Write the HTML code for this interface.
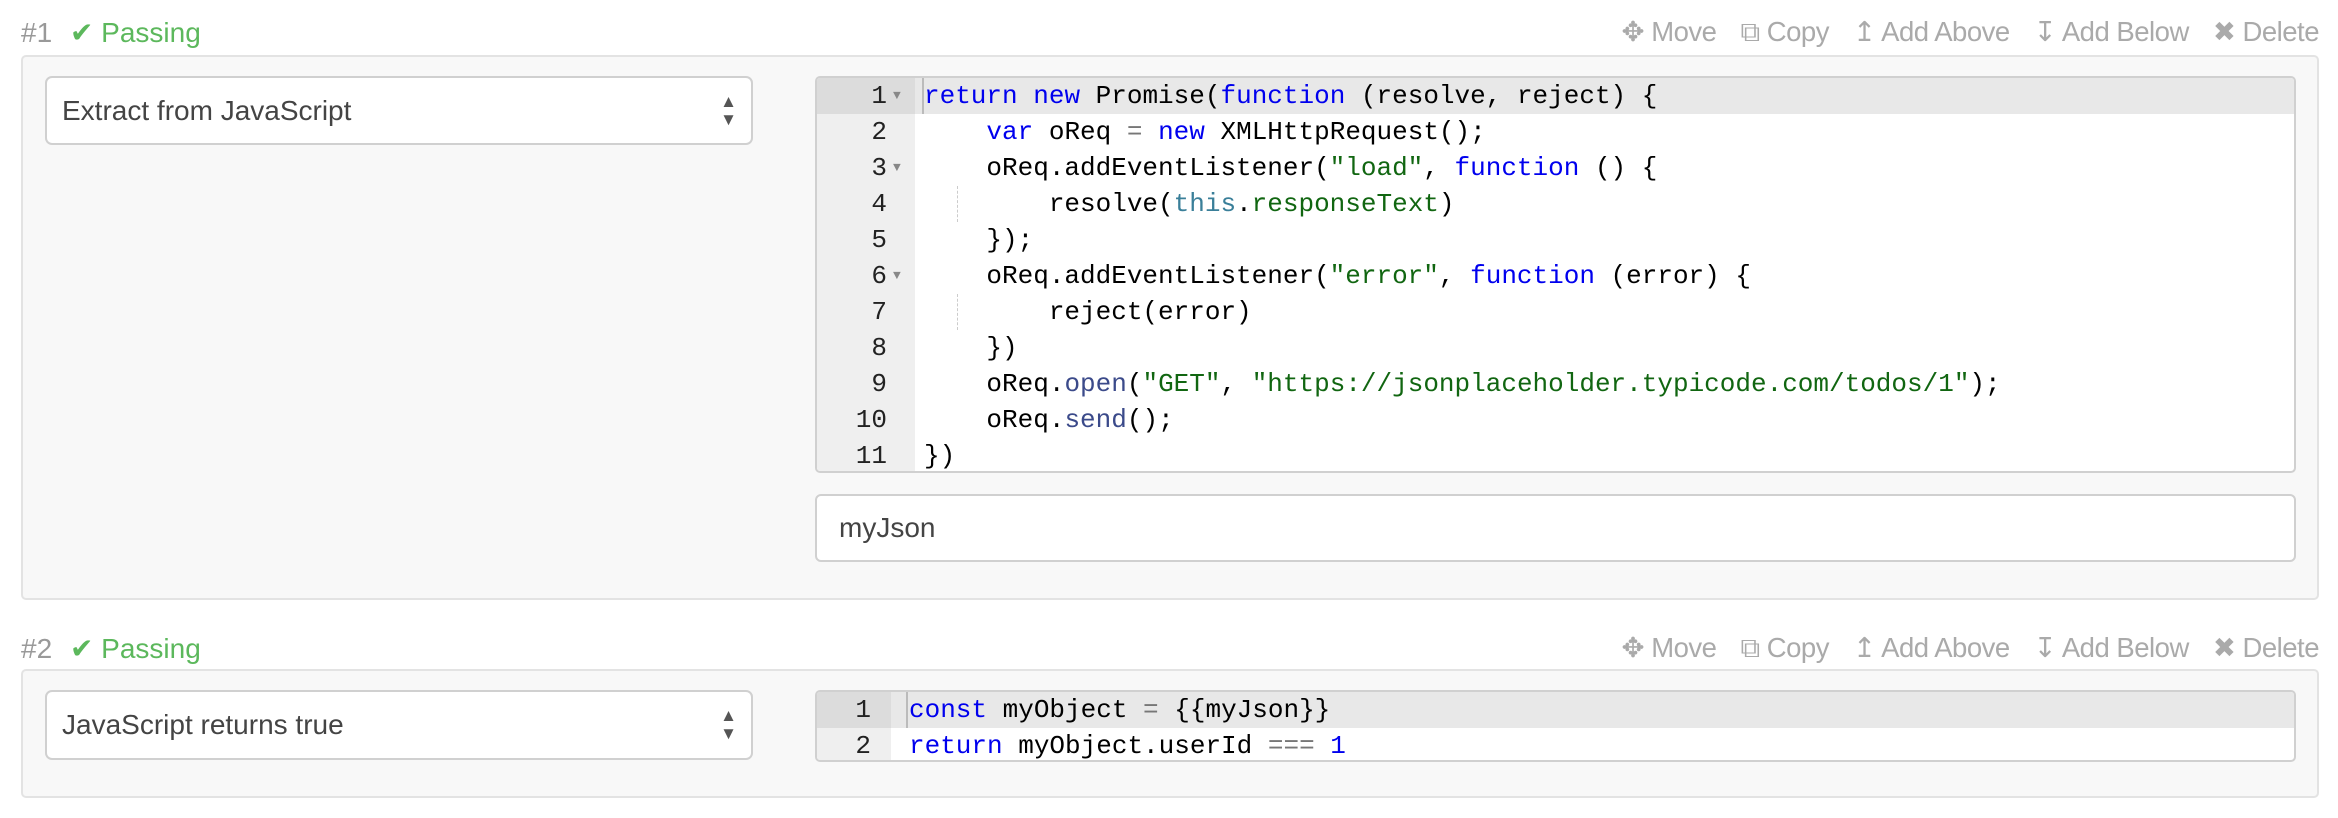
<!DOCTYPE html>
<html><head><meta charset="utf-8"><style>
*{box-sizing:border-box;margin:0;padding:0}
body{width:2338px;height:818px;background:#fff;font-family:"Liberation Sans",sans-serif;position:relative;overflow:hidden}
.hdr{position:absolute;left:21px;font-size:28px;color:#999}
.hdr .pass{color:#5cb85c;margin-left:10px}
.acts{position:absolute;right:19px;font-size:27.5px;color:#aaa;letter-spacing:-0.5px}
.acts span{margin-left:24px}
.panel{position:absolute;left:21px;width:2298px;background:#f8f8f8;border:2px solid #e3e3e3;border-radius:5px}
.sel{position:absolute;left:45px;width:708px;background:#fff;border:2px solid #d0d0d0;border-radius:7px;font-size:28px;color:#444;padding-left:15px}
.sel .arr{position:absolute;right:14px;top:50%;transform:translateY(-50%);font-size:17px;line-height:18px;color:#555;text-align:center}
.ed{position:absolute;left:815px;width:1481px;background:#fff;border:2px solid #d0d0d0;border-radius:5px;overflow:hidden;font-family:"Liberation Mono",monospace;font-size:26px}
.ln{height:36px;line-height:36px;white-space:pre;position:relative}
.g{position:absolute;left:0;top:0;bottom:0;background:#efefef}
.num{display:inline-block;text-align:right;color:#222}
.k{color:#0000ee}.s{color:#116611}.t{color:#3a7f99}.p{color:#116611}.m{color:#3b4a8a}.n{color:#0000ee}.o{color:#777}
.inp{position:absolute;left:815px;width:1481px;height:68px;top:494px;background:#fff;border:2px solid #d0d0d0;border-radius:6px;font-size:28px;color:#444;padding-left:22px;line-height:64px}
.fold{font-size:13px;color:#888;position:absolute;top:0}
</style></head><body>

<div class="hdr" style="top:16px">#1 <span class="pass">✔ Passing</span></div>
<div class="acts" style="top:16px"><span>✥ Move</span><span>⧉ Copy</span><span>↥ Add Above</span><span>↧ Add Below</span><span>✖ Delete</span></div>
<div class="panel" style="top:55px;height:545px"></div>
<div class="sel" style="top:76px;height:69px;line-height:65px">Extract from JavaScript<div class="arr">▲<br>▼</div></div>

<div class="ed" style="top:76px;height:397px">
<div class="g" style="width:98px"></div>
<div style="position:absolute;left:0;top:0;width:100%;height:36px;background:#e8e8e8"></div>
<div style="position:absolute;left:0;top:0;width:98px;height:36px;background:#dcdcdc"></div>
<div style="position:absolute;left:105px;top:0;width:2px;height:36px;background:#bbb"></div>
<div style="position:absolute;left:140px;top:108px;height:36px;border-left:1px dashed #ccc"></div>
<div style="position:absolute;left:140px;top:216px;height:36px;border-left:1px dashed #ccc"></div>
<div style="position:relative">
<div class="ln"><span class="num" style="width:70px">1</span><span class="fold" style="left:76px">▼</span><span style="display:inline-block;width:37px"></span><span class="k">return</span> <span class="k">new</span> Promise(<span class="k">function</span> (resolve, reject) {</div>
<div class="ln"><span class="num" style="width:70px">2</span><span style="display:inline-block;width:37px"></span>    <span class="k">var</span> oReq <span class="o">=</span> <span class="k">new</span> XMLHttpRequest();</div>
<div class="ln"><span class="num" style="width:70px">3</span><span class="fold" style="left:76px">▼</span><span style="display:inline-block;width:37px"></span>    oReq.addEventListener(<span class="s">"load"</span>, <span class="k">function</span> () {</div>
<div class="ln"><span class="num" style="width:70px">4</span><span style="display:inline-block;width:37px"></span>        resolve(<span class="t">this</span>.<span class="p">responseText</span>)</div>
<div class="ln"><span class="num" style="width:70px">5</span><span style="display:inline-block;width:37px"></span>    });</div>
<div class="ln"><span class="num" style="width:70px">6</span><span class="fold" style="left:76px">▼</span><span style="display:inline-block;width:37px"></span>    oReq.addEventListener(<span class="s">"error"</span>, <span class="k">function</span> (error) {</div>
<div class="ln"><span class="num" style="width:70px">7</span><span style="display:inline-block;width:37px"></span>        reject(error)</div>
<div class="ln"><span class="num" style="width:70px">8</span><span style="display:inline-block;width:37px"></span>    })</div>
<div class="ln"><span class="num" style="width:70px">9</span><span style="display:inline-block;width:37px"></span>    oReq.<span class="m">open</span>(<span class="s">"GET"</span>, <span class="s">"https://jsonplaceholder.typicode.com/todos/1"</span>);</div>
<div class="ln"><span class="num" style="width:70px">10</span><span style="display:inline-block;width:37px"></span>    oReq.<span class="m">send</span>();</div>
<div class="ln"><span class="num" style="width:70px">11</span><span style="display:inline-block;width:37px"></span>})</div>
</div></div>

<div class="inp">myJson</div>

<div class="hdr" style="top:632px">#2 <span class="pass">✔ Passing</span></div>
<div class="acts" style="top:632px"><span>✥ Move</span><span>⧉ Copy</span><span>↥ Add Above</span><span>↧ Add Below</span><span>✖ Delete</span></div>
<div class="panel" style="top:669px;height:129px"></div>
<div class="sel" style="top:690px;height:70px;line-height:66px">JavaScript returns true<div class="arr">▲<br>▼</div></div>

<div class="ed" style="top:690px;height:72px">
<div class="g" style="width:74px"></div>
<div style="position:absolute;left:0;top:0;width:100%;height:36px;background:#e8e8e8"></div>
<div style="position:absolute;left:0;top:0;width:74px;height:36px;background:#dcdcdc"></div>
<div style="position:absolute;left:89px;top:0;width:2px;height:36px;background:#bbb"></div>
<div style="position:relative">
<div class="ln"><span class="num" style="width:54px">1</span><span style="display:inline-block;width:38px"></span><span class="k">const</span> myObject <span class="o">=</span> {{myJson}}</div>
<div class="ln"><span class="num" style="width:54px">2</span><span style="display:inline-block;width:38px"></span><span class="k">return</span> myObject.userId <span class="o">===</span> <span class="n">1</span></div>
</div></div>
</body></html>
